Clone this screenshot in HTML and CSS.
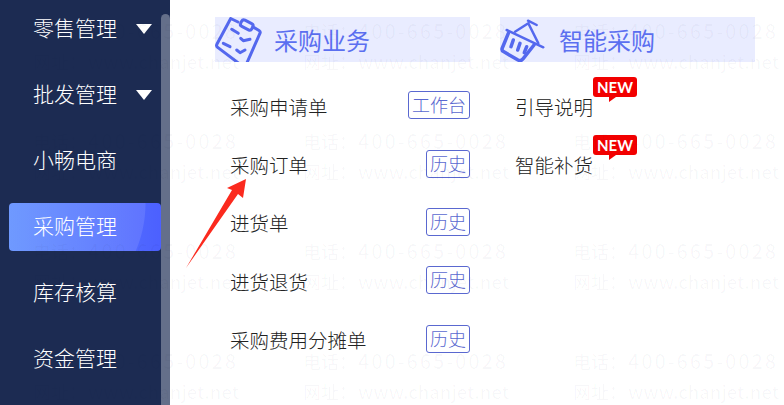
FILE: index.html
```html
<!DOCTYPE html>
<html lang="zh-CN">
<head>
    <meta charset="utf-8">
    <title>采购管理</title>
    <link rel="stylesheet" href="styles.css">
</head>
<body>
    <div class="page">
        <nav class="sidebar">
            <div class="menu">
                <a class="menu-item">零售管理<span class="caret"></span></a>
                <a class="menu-item">批发管理<span class="caret"></span></a>
                <a class="menu-item">小畅电商</a>
                <a class="menu-item active">采购管理</a>
                <a class="menu-item">库存核算</a>
                <a class="menu-item">资金管理</a>
            </div>
            <div class="scrollbar"></div>
        </nav>

        <main class="content">
            <section class="group">
                <h2 class="group-title">
                    <svg class="group-icon" viewBox="0 0 48 45">
                        <g fill="none" stroke="#5468ee" stroke-width="3" stroke-linecap="round" stroke-linejoin="round">
                            <path d="M23 5 15.700 1.500 2 27c-.8 1.500-.4 2.800 1 3.600L26 48"/>
                            <path d="M38 10l6 3.500c1.200.8 1.500 2 .8 3.200L31 48"/>
                            <rect x="25.500" y="4.500" width="12.500" height="7" rx="2.500" transform="rotate(27 31.700 8)"/>
                            <path d="M16.700 12.300l6.600 4M25.700 21.300l2.600 2.400 6.700-1.400M8.300 26.300l6.700 3.400M21.700 33l3.300 2.700 5-2.700"/>
                        </g>
                    </svg>
                    <span class="group-name">采购业务</span>
                </h2>
                <ul class="links">
                    <li class="link">采购申请单<span class="tag">工作台</span></li>
                    <li class="link">采购订单<span class="tag">历史</span></li>
                    <li class="link">进货单<span class="tag">历史</span></li>
                    <li class="link">进货退货<span class="tag">历史</span></li>
                    <li class="link">采购费用分摊单<span class="tag">历史</span></li>
                </ul>
            </section>

            <section class="group">
                <h2 class="group-title">
                    <svg class="group-icon" viewBox="0 0 48 45">
                        <g fill="none" stroke="#5468ee" stroke-width="3" stroke-linecap="round" stroke-linejoin="round">
                            <path d="M6.700 13 43.300 30.300" stroke-width="2.500"/>
                            <path d="M15 14.700 28.300 6.300 38.300 26.300M28 3.700l8.700 4.300" stroke-width="2.500"/>
                            <path d="M8.300 16.300 2.300 31c-.6 1.500-.2 2.800 1.200 3.600L18 43c2 1 3.800.6 5-1.200L34 28" stroke-width="3.500"/>
                            <path d="M13.300 23 11 29.700M20 26.300 17.700 33M26.700 29.700 24.300 35.700" stroke-width="3.500"/>
                        </g>
                    </svg>
                    <span class="group-name">智能采购</span>
                </h2>
                <ul class="links">
                    <li class="link">引导说明<span class="badge">NEW</span></li>
                    <li class="link">智能补货<span class="badge">NEW</span></li>
                </ul>
            </section>
        </main>

        <div class="watermark">
            <div class="mark"><span class="mark-label">电话：</span><span class="mark-phone">400-665-0028</span><br><span class="mark-label">网址：</span><span class="mark-url">www.chanjet.net</span></div>
            <div class="mark"><span class="mark-label">电话：</span><span class="mark-phone">400-665-0028</span><br><span class="mark-label">网址：</span><span class="mark-url">www.chanjet.net</span></div>
            <div class="mark"><span class="mark-label">电话：</span><span class="mark-phone">400-665-0028</span><br><span class="mark-label">网址：</span><span class="mark-url">www.chanjet.net</span></div>
            <div class="mark"><span class="mark-label">电话：</span><span class="mark-phone">400-665-0028</span><br><span class="mark-label">网址：</span><span class="mark-url">www.chanjet.net</span></div>
            <div class="mark"><span class="mark-label">电话：</span><span class="mark-phone">400-665-0028</span><br><span class="mark-label">网址：</span><span class="mark-url">www.chanjet.net</span></div>
            <div class="mark"><span class="mark-label">电话：</span><span class="mark-phone">400-665-0028</span><br><span class="mark-label">网址：</span><span class="mark-url">www.chanjet.net</span></div>
            <div class="mark"><span class="mark-label">电话：</span><span class="mark-phone">400-665-0028</span><br><span class="mark-label">网址：</span><span class="mark-url">www.chanjet.net</span></div>
            <div class="mark"><span class="mark-label">电话：</span><span class="mark-phone">400-665-0028</span><br><span class="mark-label">网址：</span><span class="mark-url">www.chanjet.net</span></div>
            <div class="mark"><span class="mark-label">电话：</span><span class="mark-phone">400-665-0028</span><br><span class="mark-label">网址：</span><span class="mark-url">www.chanjet.net</span></div>
            <div class="mark"><span class="mark-label">电话：</span><span class="mark-phone">400-665-0028</span><br><span class="mark-label">网址：</span><span class="mark-url">www.chanjet.net</span></div>
            <div class="mark"><span class="mark-label">电话：</span><span class="mark-phone">400-665-0028</span><br><span class="mark-label">网址：</span><span class="mark-url">www.chanjet.net</span></div>
            <div class="mark"><span class="mark-label">电话：</span><span class="mark-phone">400-665-0028</span><br><span class="mark-label">网址：</span><span class="mark-url">www.chanjet.net</span></div>
        </div>

        <svg class="arrow" viewBox="0 0 784 405">
            <polygon points="186,268 232,190 227,188 246,179 243,198 238,194" fill="#fb2a1e"/>
        </svg>
    </div>
</body>
</html>
```

FILE: styles.css
```css
* {
    box-sizing: border-box;
}

body {
    margin: 0;
    background-color: #ffffff;
    font-family: "Noto Sans CJK SC", "Noto Sans", sans-serif;
    font-weight: 300;
}

.page {
    position: relative;
    display: flex;
    width: 784px;
    height: 405px;
    overflow: hidden;
}

.sidebar {
    position: relative;
    flex: none;
    width: 170px;
    background-color: #1c2b52;
}

.menu {
    display: flex;
    flex-direction: column;
    gap: 18px;
    padding: 5px 9px 0;
}

.menu-item {
    display: flex;
    align-items: center;
    justify-content: space-between;
    height: 48px;
    padding: 0 9px 4px 24px;
    border-radius: 4px;
    color: #ffffff;
    font-size: 21px;
}

.menu-item.active {
    background:
        radial-gradient(circle at 14px 0, rgba(255, 255, 255, 0.1) 0, rgba(255, 255, 255, 0.1) 122px, transparent 123px),
        linear-gradient(90deg, #5f8eff, #4c60ff);
}

.caret {
    width: 0;
    height: 0;
    margin-top: 4px;
    border-left: 8px solid transparent;
    border-right: 8px solid transparent;
    border-top: 10px solid #ffffff;
}

.scrollbar {
    position: absolute;
    top: 14px;
    bottom: 0;
    right: 0;
    width: 9px;
    border-radius: 5px 5px 0 0;
    background-color: #646f8a;
}

.content {
    display: flex;
    gap: 30px;
    padding: 17px 0 0 45px;
}

.group {
    width: 255px;
}

.group-title {
    display: flex;
    align-items: center;
    gap: 11px;
    height: 45px;
    margin: 0;
    background-color: #e9ecff;
    color: #5b6ff0;
    font-size: 24px;
    font-weight: 400;
}

.group-name {
    margin-top: -1px;
}

.group-icon {
    flex: none;
    width: 48px;
    height: 45px;
}

.links {
    list-style: none;
    margin: 0;
    padding: 15px 0 0 15px;
}

.link {
    position: relative;
    display: flex;
    align-items: center;
    justify-content: space-between;
    height: 58.4px;
    color: #222222;
    font-size: 19.500px;
}

.tag {
    height: 28px;
    margin-top: -2px;
    padding: 0 3px;
    border: 1px solid #5a68d0;
    border-radius: 3px;
    color: #5a68d0;
    font-size: 18px;
    line-height: 24px;
}

.badge {
    position: absolute;
    top: 0;
    left: 78px;
    width: 44px;
    height: 20px;
    border-radius: 3px;
    background-color: #f20000;
    color: #ffffff;
    font-family: "Lato", sans-serif;
    font-size: 15px;
    font-weight: 700;
    line-height: 20px;
    text-align: center;
}

.badge::after {
    content: "";
    position: absolute;
    top: 20px;
    left: 16px;
    border-top: 5px solid #f20000;
    border-left: 0 solid transparent;
    border-right: 7px solid transparent;
}

.watermark {
    position: absolute;
    top: 16px;
    left: 33px;
    display: grid;
    grid-template-columns: repeat(3, 270px);
    grid-auto-rows: 110px;
    pointer-events: none;
}

.mark {
    color: rgba(20, 30, 70, 0.032);
    font-size: 20px;
    font-weight: 500;
    line-height: 30px;
    white-space: nowrap;
}

.mark-label {
    margin-right: 1px;
    font-size: 18px;
}

.mark-phone {
    letter-spacing: 1.800px;
}

.mark-url {
    font-size: 18.500px;
}

.arrow {
    position: absolute;
    top: 0;
    left: 0;
    width: 784px;
    height: 405px;
    pointer-events: none;
}
```
